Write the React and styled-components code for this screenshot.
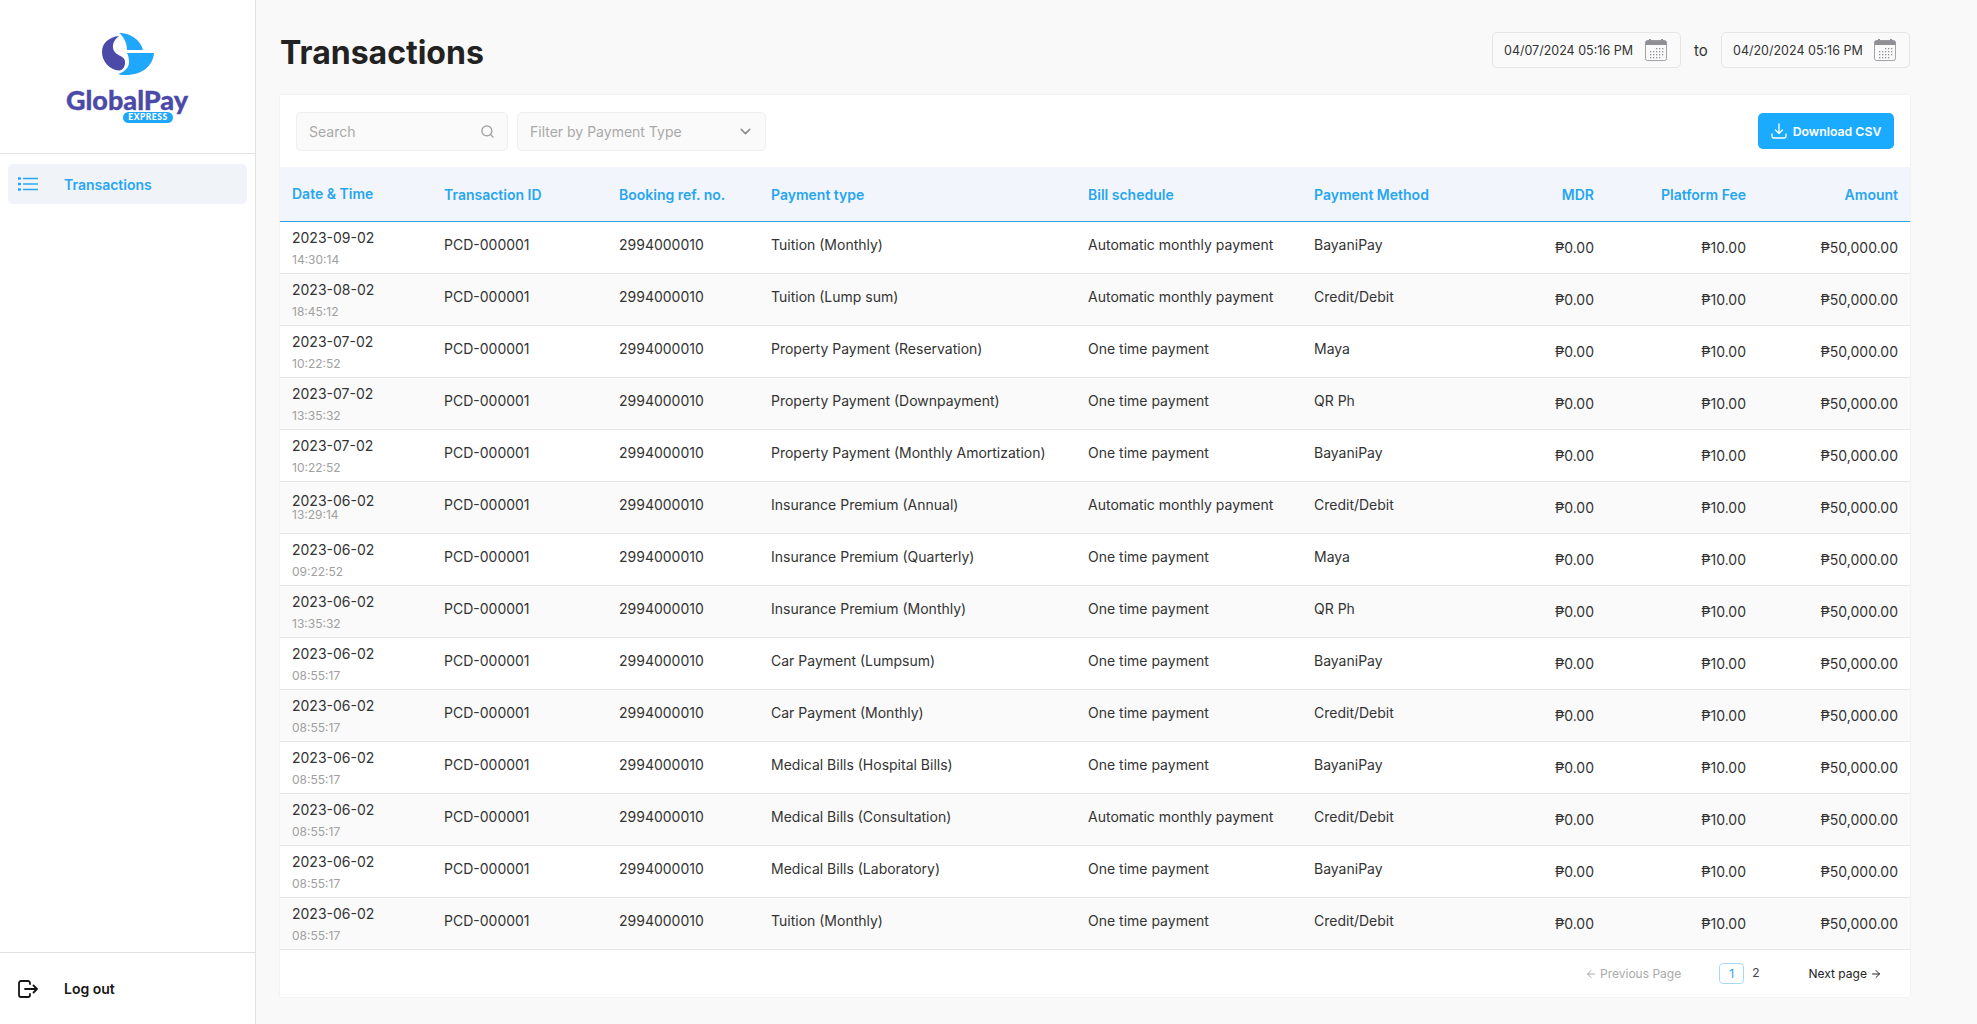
import React from "react";
import styled, { createGlobalStyle } from "styled-components";
import { Search, ChevronDown, ArrowLeft, ArrowRight } from "lucide-react";

const Global = createGlobalStyle`
  html, body { margin: 0; padding: 0; height: 100%; background: #f9f9f9; }
  body { font-family: Inter, "Liberation Sans", sans-serif; color: #2b2b2b; overflow: hidden; }
  * { box-sizing: border-box; }
`;

const Page = styled.div`display: flex; height: 100vh; width: 100%;`;

const Sidebar = styled.aside`
  width: 256px; flex: none; background: #fff; border-right: 1px solid #e2e2e2;
  display: flex; flex-direction: column;
`;
const LogoArea = styled.div`
  height: 154px; border-bottom: 1px solid #e2e2e2; display: flex; flex-direction: column;
  align-items: center; padding-top: 33px;
`;
const LogoWord = styled.div`
  font-family: Lato, sans-serif; font-weight: 900; font-size: 27px; line-height: 28px;
  color: #4b4aa8; margin-top: 10px; height: 26px; -webkit-text-stroke: .3px #4b4aa8; margin-left: -1px;
`;
const LogoBadge = styled.div`
  align-self: flex-start; margin-left: 123px; margin-top: 0; height: 11px; width: 50px; border-radius: 6px;
  background: #1fa7fb; color: #fff; font-family: Lato, sans-serif; font-weight: 900; font-size: 8.500px;
  letter-spacing: .5px; line-height: 11px; text-align: center;
`;
const Nav = styled.nav`flex: 1; padding: 10px 8px;`;
const NavItem = styled.div`
  height: 40px; display: flex; align-items: center; gap: 26px; padding-left: 10px; width: 239px;
  background: #f0f4f9; border-radius: 5px; color: #27a6f5; font-size: 14px; font-weight: 600;
`;
const Logout = styled.div`
  height: 72px; border-top: 1px solid #e2e2e2; display: flex; align-items: center; gap: 26px;
  padding-left: 18px; font-size: 14px; font-weight: 600; color: #161616;
`;

const Main = styled.main`flex: 1; min-width: 0; padding: 32px 67px 0 24px;`;
const Header = styled.header`
  display: flex; align-items: center; justify-content: space-between; height: 36px; margin-bottom: 27px;
`;
const Title = styled.h1`margin: 6px 0 0; font-size: 32px; line-height: 36px; font-weight: 700; color: #222;`;
const DateRange = styled.div`display: flex; align-items: center;`;
const DateBox = styled.div`
  width: 189px; height: 36px; background: #fafafa; border: 1px solid #e6e6e6; border-radius: 5px;
  display: flex; align-items: center; justify-content: space-between; padding: 0 13px 0 11px;
  font-size: 12.500px; color: #333;
`;
const ToLabel = styled.span`width: 40px; text-align: center; font-size: 15px; color: #333; padding-top: 1px;`;

const Card = styled.section`
  background: #fff; box-shadow: 0 0 2px rgba(0, 0, 0, .08); height: 902px;
`;
const Toolbar = styled.div`
  height: 72px; display: flex; align-items: center; padding: 0 16px; gap: 9px;
`;
const Field = styled.div`
  width: ${p => p.$w}px; height: 39px; background: #fafafa; border: 1.500px solid #efefef; border-radius: 5px;
  display: flex; align-items: center; justify-content: space-between; padding: 0 ${p => p.$pr}px 0 12px;
  font-size: 14px; color: #a9a9a9;
`;
const DownloadButton = styled.button`
  margin-left: auto; width: 136px; height: 36px; border: 0; border-radius: 5px; background: #1aabff;
  color: #fff; font: 600 12.300px Inter, sans-serif; display: flex; align-items: center; justify-content: center; gap: 6px;
`;

const Table = styled.table`
  width: 100%; border-collapse: collapse; table-layout: fixed; font-size: 14px;
`;
const Th = styled.th`
  height: 54px; padding: ${p => p.$up ? "0 12px" : "2px 12px 0"}; background: #f3f5fc; color: #27a6f0;
  font-size: 14px; font-weight: 600; text-align: ${p => p.$right ? "right" : "left"};
  border-bottom: 1px solid #2ba3e2;
`;
const Tr = styled.tr`background: ${p => p.$alt ? "#fafafa" : "#fff"};`;
const Td = styled.td`
  height: 52px; padding: ${p => p.$right ? "16px" : "13px"} 12px 0; vertical-align: top; line-height: 20px;
  color: #333; text-align: ${p => p.$right ? "right" : "left"}; border-bottom: 1px solid #e6e6e6;
`;
const DateCell = styled.td`
  height: 52px; padding: ${p => p.$tight ? "9px" : "6px"} 12px 0; vertical-align: top; border-bottom: 1px solid #e6e6e6;
`;
const DateMain = styled.div`line-height: 20px; color: #333;`;
const DateSub = styled.div`
  font-size: 12px; line-height: 14px; color: #a0a0a0; margin-top: ${p => p.$tight ? "-3px" : "5px"};
`;

const Pager = styled.div`
  height: 48px; display: flex; align-items: center; font-size: 12px; padding-left: 1305px;
`;
const PagerLink = styled.span`
  display: flex; align-items: center; gap: 3px; color: ${p => p.$off ? "#aaaaaa" : "#222"};
`;
const PageNums = styled.div`display: flex; align-items: center; gap: 8px; margin: 0 49px 0 38px;`;
const PageNum = styled.span`
  width: ${p => p.$active ? "25px" : "auto"}; height: 21px; line-height: 19px; text-align: center;
  border: ${p => p.$active ? "1px solid #a6dbf5" : "0"}; border-radius: 4px;
  color: ${p => p.$active ? "#27a6e8" : "#444"};
`;

const LogoMark = () => (
  <svg width="52" height="43" viewBox="0 0 52 43">
    <path fill="#1fa7fb" d="M17 0C28 0 38 6 41 17H25C25 10 22 4 17 0Z" />
    <path fill="#1fa7fb" d="M25 20H52C51 33 40 42 24 42C21 42 18 42 16 41C22 39 27 35 27 29C27 25 26 22 25 20Z" />
    <path fill="#4b4aa8" d="M17 3C7 4 0 10 0 19C0 29 8 37 17 37.500C21 37.500 23.500 33 23 28C22 22 12 23 11 15C10.500 10 13 6 17 3Z" />
  </svg>
);
const ListIcon = () => (
  <svg width="20" height="14" viewBox="0 0 20 14" fill="none" stroke="#27a6f5" strokeWidth="1.400">
    <path d="M5 1.500H20M5 7H20M5 12.500H20" />
    <path d="M0 1.500H2M0 7H2M0 12.500H2" strokeWidth="2.400" strokeLinecap="round" />
  </svg>
);
const LogoutIcon = () => (
  <svg width="20" height="18" viewBox="0 0 20 18" fill="none" stroke="#161616" strokeWidth="1.800" strokeLinecap="round" strokeLinejoin="round">
    <path d="M12 4V3C12 2 11 1 10 1H3C2 1 1 2 1 3V15C1 16 2 17 3 17H10C11 17 12 16 12 15V14" />
    <path d="M7 9H19M15.500 5.500L19 9L15.500 12.500" />
  </svg>
);
const CalendarIcon = () => (
  <svg width="22" height="22" viewBox="0 0 22 22">
    <rect x=".5" y="1.500" width="21" height="20" rx="2" fill="#fafafa" stroke="#a3a3a8" />
    <path fill="#8f8f95" d="M2.500 1.500H4V0H6V1.500H16V0H18V1.500H19.500A2 2 0 0 1 21.500 3.500V6H.5V3.500A2 2 0 0 1 2.500 1.500Z" />
    <g fill="#8f8f95">
      {[9, 12, 15, 18].flatMap((y, r) =>
        [5, 8, 11, 14, 17].map((x, c) =>
          (r === 0 && c < 2) || (r === 3 && c > 3) ? null : <rect key={`${r}-${c}`} x={x} y={y} width="1.300" height="1.300" />
        )
      )}
    </g>
  </svg>
);
const DownloadIcon = () => (
  <svg width="16" height="16" viewBox="0 0 16 16" fill="none" stroke="#fff" strokeWidth="1.300" strokeLinecap="round" strokeLinejoin="round">
    <path d="M8 1V10.500M4.500 7L8 10.500L11.500 7" />
    <path d="M1 11V13C1 14.200 1.800 15 3 15H13C14.200 15 15 14.200 15 13V11" />
  </svg>
);

const rows = [
  ["2023-09-02", "14:30:14", "Tuition (Monthly)", "Automatic monthly payment", "BayaniPay"],
  ["2023-08-02", "18:45:12", "Tuition (Lump sum)", "Automatic monthly payment", "Credit/Debit"],
  ["2023-07-02", "10:22:52", "Property Payment (Reservation)", "One time payment", "Maya"],
  ["2023-07-02", "13:35:32", "Property Payment (Downpayment)", "One time payment", "QR Ph"],
  ["2023-07-02", "10:22:52", "Property Payment (Monthly Amortization)", "One time payment", "BayaniPay"],
  ["2023-06-02", "13:29:14", "Insurance Premium (Annual)", "Automatic monthly payment", "Credit/Debit", true],
  ["2023-06-02", "09:22:52", "Insurance Premium (Quarterly)", "One time payment", "Maya"],
  ["2023-06-02", "13:35:32", "Insurance Premium (Monthly)", "One time payment", "QR Ph"],
  ["2023-06-02", "08:55:17", "Car Payment (Lumpsum)", "One time payment", "BayaniPay"],
  ["2023-06-02", "08:55:17", "Car Payment (Monthly)", "One time payment", "Credit/Debit"],
  ["2023-06-02", "08:55:17", "Medical Bills (Hospital Bills)", "One time payment", "BayaniPay"],
  ["2023-06-02", "08:55:17", "Medical Bills (Consultation)", "Automatic monthly payment", "Credit/Debit"],
  ["2023-06-02", "08:55:17", "Medical Bills (Laboratory)", "One time payment", "BayaniPay"],
  ["2023-06-02", "08:55:17", "Tuition (Monthly)", "One time payment", "Credit/Debit"],
];
const widths = [152, 175, 152, 317, 226, 152, 152, 152, 152];

export default function App() {
  return (
    <Page>
      <Global />
      <Sidebar>
        <LogoArea>
          <LogoMark />
          <LogoWord>GlobalPay</LogoWord>
          <LogoBadge>EXPRESS</LogoBadge>
        </LogoArea>
        <Nav>
          <NavItem><ListIcon />Transactions</NavItem>
        </Nav>
        <Logout><LogoutIcon />Log out</Logout>
      </Sidebar>
      <Main>
        <Header>
          <Title>Transactions</Title>
          <DateRange>
            <DateBox>04/07/2024 05:16 PM<CalendarIcon /></DateBox>
            <ToLabel>to</ToLabel>
            <DateBox>04/20/2024 05:16 PM<CalendarIcon /></DateBox>
          </DateRange>
        </Header>
        <Card>
          <Toolbar>
            <Field $w={212} $pr={12}><span>Search</span><Search size={15} color="#9a9a9a" /></Field>
            <Field $w={249} $pr={11}><span>Filter by Payment Type</span><ChevronDown size={17} color="#8a8a8a" /></Field>
            <DownloadButton><DownloadIcon />Download CSV</DownloadButton>
          </Toolbar>
          <Table>
            <colgroup>{widths.map((w, i) => <col key={i} style={{ width: w }} />)}</colgroup>
            <thead>
              <tr>
                <Th $up>Date &amp; Time</Th>
                <Th>Transaction ID</Th>
                <Th>Booking ref. no.</Th>
                <Th>Payment type</Th>
                <Th>Bill schedule</Th>
                <Th>Payment Method</Th>
                <Th $right>MDR</Th>
                <Th $right>Platform Fee</Th>
                <Th $right>Amount</Th>
              </tr>
            </thead>
            <tbody>
              {rows.map((r, i) => (
                <Tr key={i} $alt={i % 2 === 1}>
                  <DateCell $tight={r[5]}>
                    <DateMain>{r[0]}</DateMain>
                    <DateSub $tight={r[5]}>{r[1]}</DateSub>
                  </DateCell>
                  <Td>PCD-000001</Td>
                  <Td>2994000010</Td>
                  <Td>{r[2]}</Td>
                  <Td>{r[3]}</Td>
                  <Td>{r[4]}</Td>
                  <Td $right>₱0.00</Td>
                  <Td $right>₱10.00</Td>
                  <Td $right>₱50,000.00</Td>
                </Tr>
              ))}
            </tbody>
          </Table>
          <Pager>
            <PagerLink $off><ArrowLeft size={12} />Previous Page</PagerLink>
            <PageNums>
              <PageNum $active>1</PageNum>
              <PageNum>2</PageNum>
            </PageNums>
            <PagerLink>Next page<ArrowRight size={12} /></PagerLink>
          </Pager>
        </Card>
      </Main>
    </Page>
  );
}
